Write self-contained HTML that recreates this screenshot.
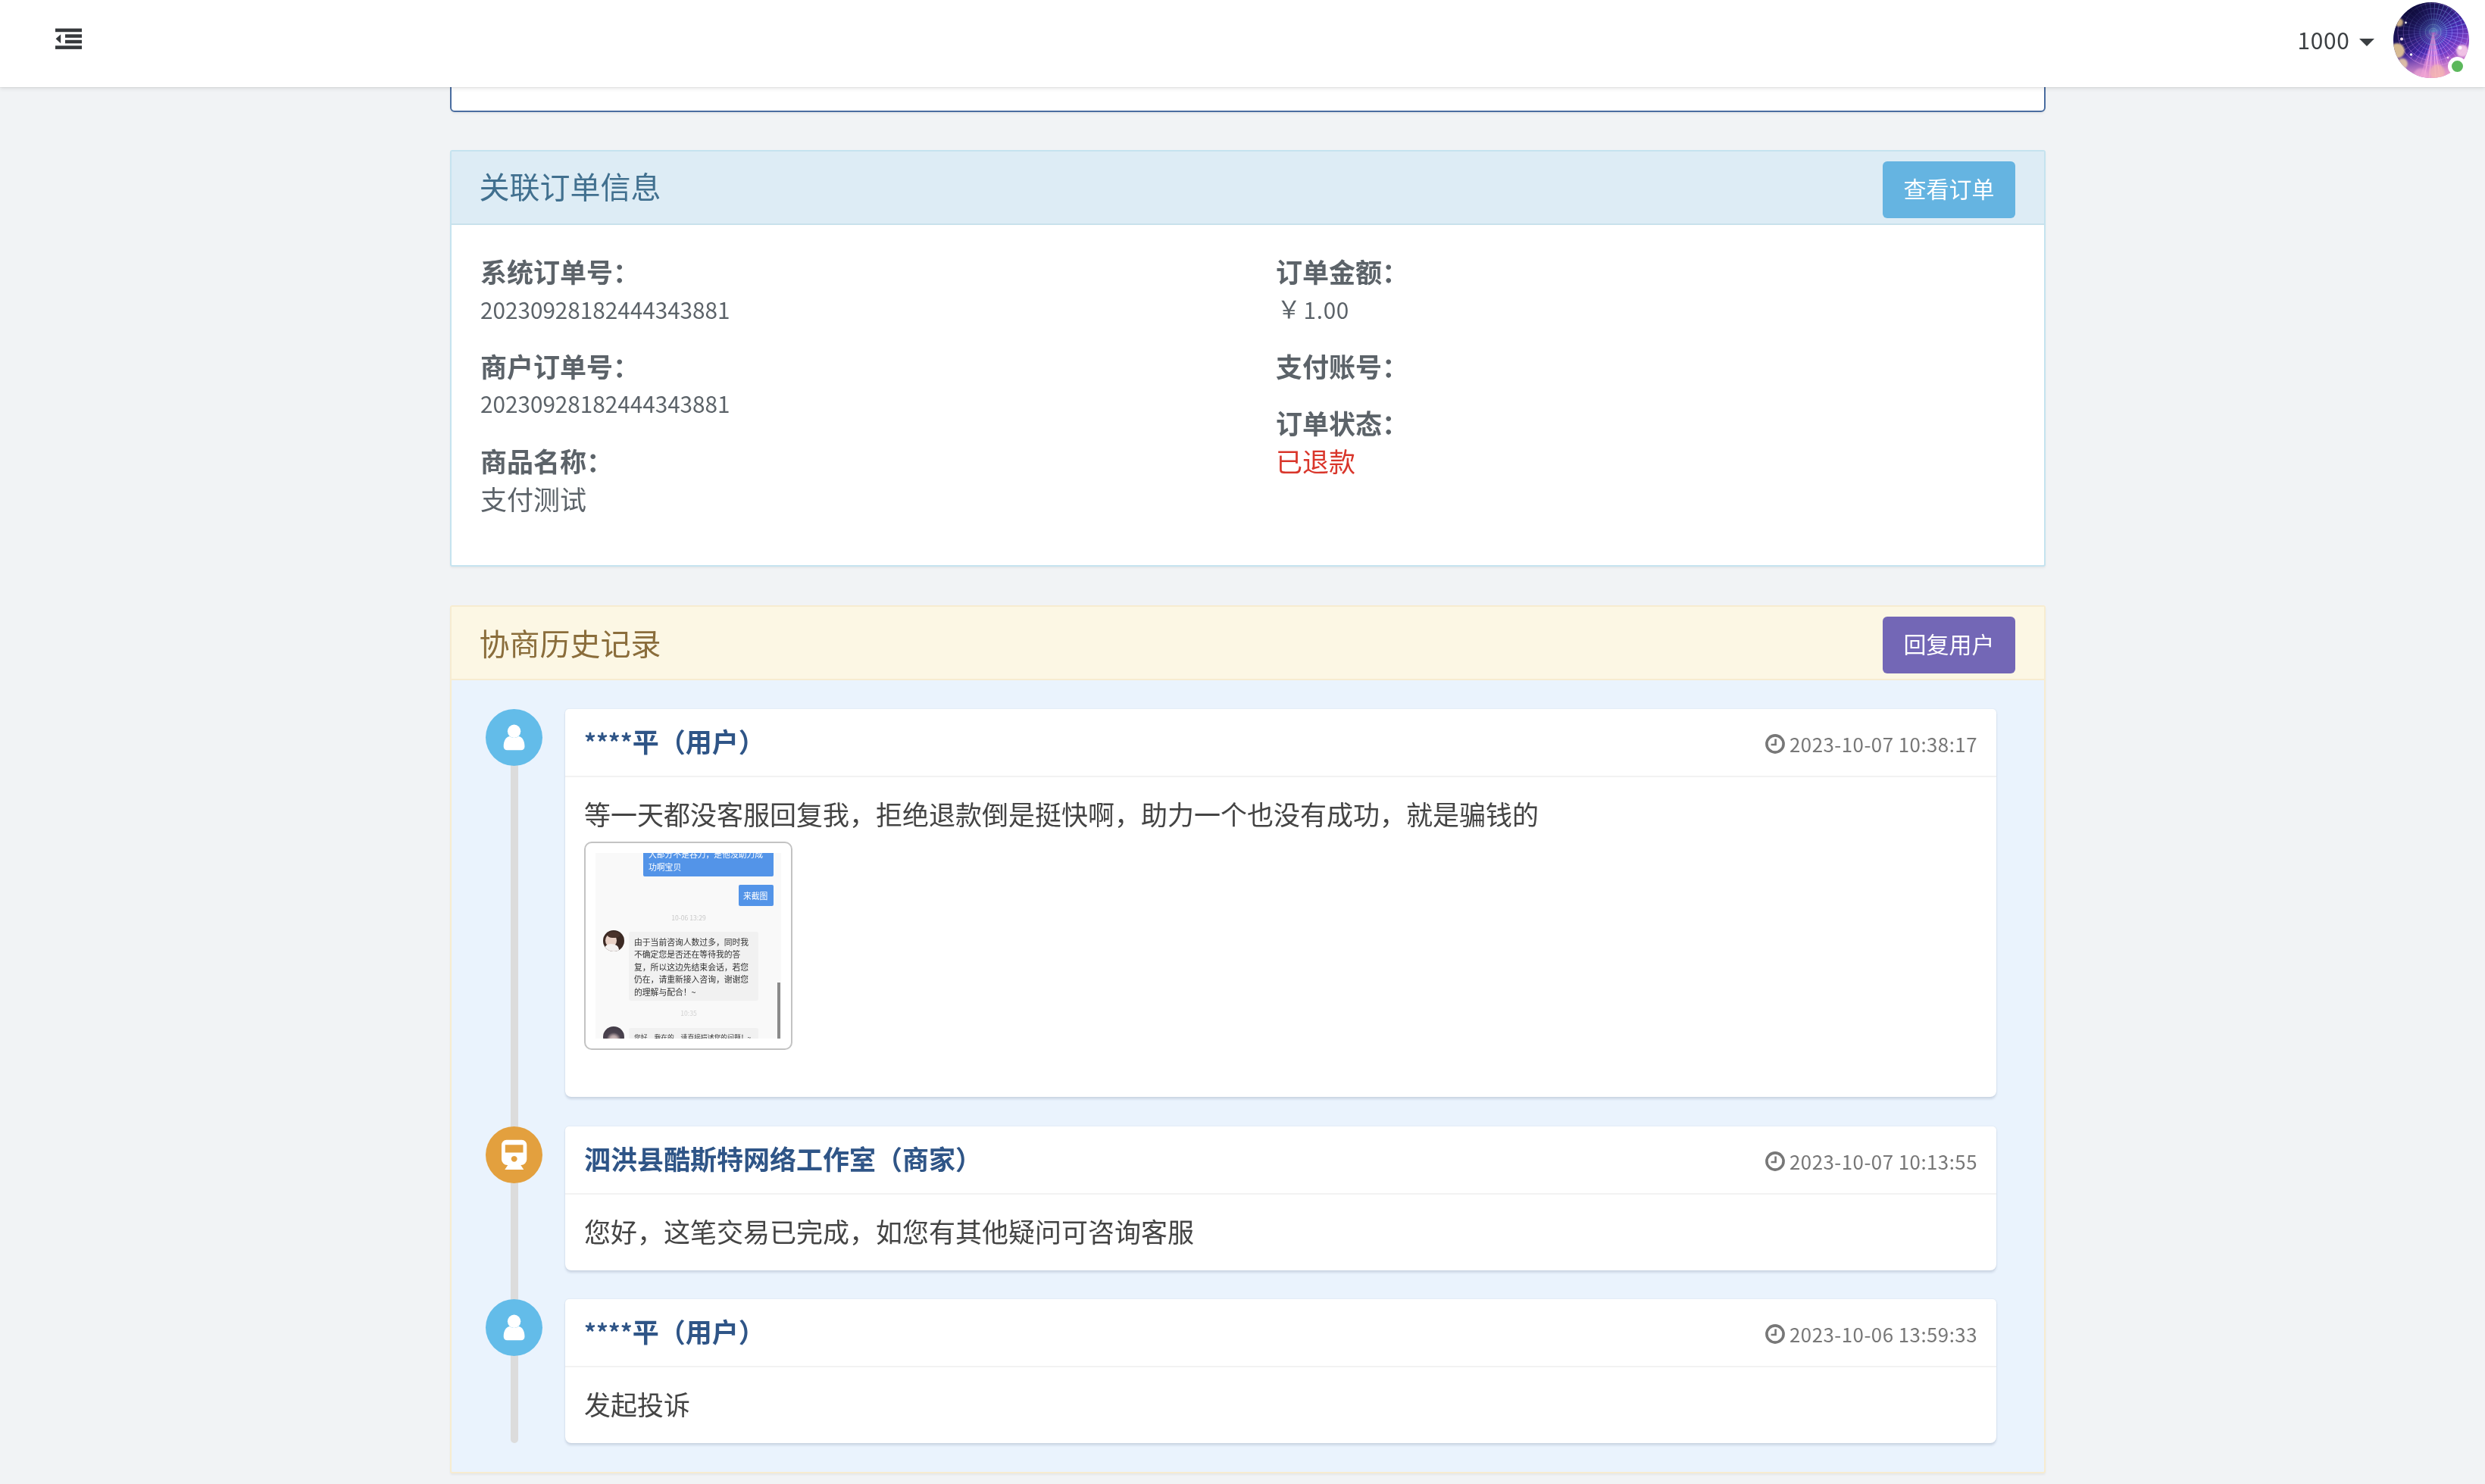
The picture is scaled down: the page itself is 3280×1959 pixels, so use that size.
<!DOCTYPE html>
<html lang="zh-CN">
<head>
<meta charset="utf-8">
<title>投诉详情</title>
<style>
*{box-sizing:border-box;margin:0;padding:0}
html,body{width:3280px;height:1959px;overflow:hidden}
body{background:#f1f3f5;font-family:"Noto Sans CJK SC","Liberation Sans",sans-serif;font-size:35px;line-height:50px;color:#5c6369;position:relative;will-change:transform}
.n{font-size:29.7px;position:relative;top:-2.5px}
.yen{font-size:31.5px;position:relative;left:1.5px;top:-3px}
/* top bar */
#topbar{position:absolute;left:0;top:0;width:3280px;height:115px;background:#fff;z-index:10;box-shadow:0 2px 5px rgba(0,0,0,.10),0 1px 0 rgba(0,0,0,.04)}
#menu{position:absolute;left:73px;top:37px;width:36px;height:29px}
#uname{position:absolute;left:3032.5px;top:27px;font-size:29.8px;letter-spacing:.7px;line-height:50px;color:#3b3f42;white-space:nowrap}
#caret{position:absolute;left:3114px;top:51px;width:0;height:0;border-left:10px solid transparent;border-right:10px solid transparent;border-top:10px solid #3b3f42}
#avatar{position:absolute;left:3159px;top:3px;width:100px;height:100px}
#online{position:absolute;left:3231px;top:75px;width:25px;height:25px;border-radius:50%;background:#5cb85c;border:5px solid #fff}
/* panels */
.panel{position:absolute;left:594px;width:2106px;background:#fff;border:2px solid #ccc;border-radius:3px;box-shadow:0 2px 3px rgba(0,0,0,.05)}
#p0{top:60px;height:88px;border-color:#4a6da0;border-radius:6px}
#p1{top:198px;height:550px;border-color:#c5e3ef}
#p2{top:799px;height:1146px;border-color:#f7ecd0;background:#eaf3fd}
.hd{height:97px;border-bottom:2px solid;position:relative}
#p1 .hd{background:#ddecf5;border-color:#c8e1ec;color:#41708f}
#p2 .hd{background:#fcf7e4;border-color:#f7ecd0;color:#8a6d3b}
.hd h3{position:absolute;left:36.5px;top:20px;font-size:40px;line-height:50px;font-weight:400}
#p2 .hd h3{top:21.5px}
.btn{position:absolute;right:38px;top:13px;width:175px;height:75px;border-radius:6px;color:#fff;font-size:30px;line-height:71px;text-align:center}
.b-info{background:#65b4e1}
.b-purple{background:#7367b6}
/* info body */
.col{position:absolute;top:133px}
.col p{margin:0 0 24.75px;height:100px;white-space:nowrap}
.col p.one{height:50px}
.col b{font-weight:700}
.red{color:#d9362b}
/* timeline */
#line{position:absolute;left:78px;top:172px;width:10px;height:932px;background:#dcdcdc;border-radius:5px}
.dot{position:absolute;left:45px;width:75px;height:75px;border-radius:50%}
.dot svg{position:absolute;left:0;top:0;width:75px;height:75px}
.d-user{background:#63bce9}
.d-shop{background:#e3a03e}
.card{position:absolute;left:150px;width:1889px;background:#fff;border-radius:5px 5px 8px 8px;box-shadow:0 2.5px 3px rgba(50,70,100,.15),0 0 2px rgba(50,70,100,.10)}
.chd{height:89.5px;border-bottom:2px solid #f2f2f2;position:relative}
.chd b i{font-style:normal;font-size:31.4px;position:relative;top:-1px}
.chd b{position:absolute;left:25px;top:16.5px;font-size:35px;line-height:50px;color:#2f5587;font-weight:700;white-space:nowrap}
.chd .tm{position:absolute;right:25px;top:20.5px;font-size:25.8px;letter-spacing:.5px;line-height:50px;color:#777;white-space:nowrap}
.chd .tm svg{position:absolute;left:-32.5px;top:12px;width:26px;height:26px}
.cbd{padding:23.5px 25px 0;color:#444;white-space:nowrap}
/* thumbnail */
#thumb{position:relative;width:275px;height:275px;margin-top:12.4px;border:2.5px solid #c3c3c3;border-radius:10px;background:#fff;overflow:hidden}
#shot{position:absolute;left:13px;top:13px;width:245px;height:245px;background:#f9f9f9;overflow:hidden;font-size:10.8px;line-height:16.4px;color:#333}
#shot div{position:absolute}
</style>
</head>
<body>
<div id="topbar">
<svg id="menu" viewBox="0 0 36 29"><g fill="#36393c"><rect x="0" y="0.6" width="35" height="4.6"/><rect x="13" y="8.3" width="22" height="4.5"/><rect x="13" y="15.8" width="22" height="4.5"/><rect x="0" y="23.3" width="35" height="4.6"/><path d="M0.6 14.3 L7.2 8.2 L7.2 20.2 Z"/></g></svg>
<span id="uname">1000</span><i id="caret"></i>
<svg id="avatar" viewBox="0 0 100 100">
<defs>
<clipPath id="avc"><circle cx="50" cy="50" r="50"/></clipPath>
<linearGradient id="avbg" x1="0" y1="0" x2="0.75" y2="1"><stop offset="0" stop-color="#120f44"/><stop offset="0.35" stop-color="#211766"/><stop offset="0.6" stop-color="#4326a8"/><stop offset="0.8" stop-color="#8a45c4"/><stop offset="1" stop-color="#e894cf"/></linearGradient>
<radialGradient id="avglow" cx="0.526" cy="0.392" r="0.42"><stop offset="0" stop-color="#9fd8ff" stop-opacity="0.9"/><stop offset="0.12" stop-color="#5f86ff" stop-opacity="0.6"/><stop offset="0.55" stop-color="#5a3fe0" stop-opacity="0.3"/><stop offset="1" stop-color="#5a3fe0" stop-opacity="0"/></radialGradient>
<linearGradient id="avbot" x1="0" y1="0" x2="0" y2="1"><stop offset="0.68" stop-color="#f0a0d0" stop-opacity="0"/><stop offset="1" stop-color="#f3a9c6" stop-opacity="0.85"/></linearGradient>
<filter id="avbl" x="-30%" y="-30%" width="160%" height="160%"><feGaussianBlur stdDeviation="1.1"/></filter>
<radialGradient id="avdk" cx="0.25" cy="0.12" r="0.6"><stop offset="0" stop-color="#0d0b38" stop-opacity="0.85"/><stop offset="1" stop-color="#0d0b38" stop-opacity="0"/></radialGradient>
</defs>
<g clip-path="url(#avc)">
<rect width="100" height="100" fill="url(#avbg)"/>
<rect width="100" height="100" fill="url(#avglow)"/>
<path d="M52.6 39.2 L34 104 L68 104 Z" fill="#ef8fe8" opacity="0.5"/>
<path d="M52.6 39.2 L40 104 M52.6 39.2 L62 104 M52.6 39.2 L47 104 M52.6 39.2 L56 104" stroke="#ffb5f2" stroke-width="1.2" opacity="0.85" fill="none"/>
<line x1="52.6" y1="39.2" x2="99.5" y2="41.6" stroke="#9d8cff" stroke-width="0.7" opacity="0.8"/><line x1="52.6" y1="39.2" x2="98.6" y2="48.6" stroke="#9d8cff" stroke-width="0.7" opacity="0.8"/><line x1="52.6" y1="39.2" x2="96.5" y2="55.3" stroke="#9d8cff" stroke-width="0.7" opacity="0.8"/><line x1="52.6" y1="39.2" x2="93.3" y2="61.7" stroke="#e58cf5" stroke-width="0.7" opacity="0.8"/><line x1="52.6" y1="39.2" x2="89.1" y2="67.5" stroke="#e58cf5" stroke-width="0.7" opacity="0.8"/><line x1="52.6" y1="39.2" x2="84.0" y2="72.6" stroke="#e58cf5" stroke-width="0.7" opacity="0.8"/><line x1="52.6" y1="39.2" x2="78.2" y2="76.9" stroke="#e58cf5" stroke-width="0.7" opacity="0.8"/><line x1="52.6" y1="39.2" x2="71.7" y2="80.3" stroke="#e58cf5" stroke-width="0.7" opacity="0.8"/><line x1="52.6" y1="39.2" x2="64.8" y2="82.7" stroke="#e58cf5" stroke-width="0.7" opacity="0.8"/><line x1="52.6" y1="39.2" x2="57.5" y2="84.0" stroke="#e58cf5" stroke-width="0.7" opacity="0.8"/><line x1="52.6" y1="39.2" x2="50.1" y2="84.1" stroke="#e58cf5" stroke-width="0.7" opacity="0.8"/><line x1="52.6" y1="39.2" x2="42.8" y2="83.2" stroke="#e58cf5" stroke-width="0.7" opacity="0.8"/><line x1="52.6" y1="39.2" x2="35.8" y2="81.2" stroke="#e58cf5" stroke-width="0.7" opacity="0.5"/><line x1="52.6" y1="39.2" x2="29.1" y2="78.2" stroke="#e58cf5" stroke-width="0.7" opacity="0.5"/><line x1="52.6" y1="39.2" x2="23.0" y2="74.2" stroke="#e58cf5" stroke-width="0.7" opacity="0.5"/><line x1="52.6" y1="39.2" x2="17.7" y2="69.3" stroke="#e58cf5" stroke-width="0.7" opacity="0.5"/><line x1="52.6" y1="39.2" x2="13.2" y2="63.7" stroke="#e58cf5" stroke-width="0.7" opacity="0.5"/><line x1="52.6" y1="39.2" x2="9.7" y2="57.5" stroke="#e58cf5" stroke-width="0.7" opacity="0.5"/><line x1="52.6" y1="39.2" x2="7.2" y2="50.8" stroke="#9d8cff" stroke-width="0.7" opacity="0.5"/><line x1="52.6" y1="39.2" x2="5.9" y2="43.9" stroke="#9d8cff" stroke-width="0.7" opacity="0.5"/><line x1="52.6" y1="39.2" x2="5.7" y2="36.8" stroke="#9d8cff" stroke-width="0.7" opacity="0.5"/><line x1="52.6" y1="39.2" x2="6.6" y2="29.8" stroke="#86c2ff" stroke-width="0.7" opacity="0.5"/><line x1="52.6" y1="39.2" x2="8.7" y2="23.1" stroke="#86c2ff" stroke-width="0.7" opacity="0.5"/><line x1="52.6" y1="39.2" x2="11.9" y2="16.7" stroke="#86c2ff" stroke-width="0.7" opacity="0.5"/><line x1="52.6" y1="39.2" x2="16.1" y2="10.9" stroke="#86c2ff" stroke-width="0.7" opacity="0.5"/><line x1="52.6" y1="39.2" x2="21.2" y2="5.8" stroke="#86c2ff" stroke-width="0.7" opacity="0.5"/><line x1="52.6" y1="39.2" x2="27.0" y2="1.5" stroke="#86c2ff" stroke-width="0.7" opacity="0.5"/><line x1="52.6" y1="39.2" x2="33.5" y2="-1.9" stroke="#86c2ff" stroke-width="0.7" opacity="0.5"/><line x1="52.6" y1="39.2" x2="40.4" y2="-4.3" stroke="#86c2ff" stroke-width="0.7" opacity="0.5"/><line x1="52.6" y1="39.2" x2="47.7" y2="-5.6" stroke="#86c2ff" stroke-width="0.7" opacity="0.8"/><line x1="52.6" y1="39.2" x2="55.1" y2="-5.7" stroke="#86c2ff" stroke-width="0.7" opacity="0.8"/><line x1="52.6" y1="39.2" x2="62.4" y2="-4.8" stroke="#86c2ff" stroke-width="0.7" opacity="0.8"/><line x1="52.6" y1="39.2" x2="69.4" y2="-2.8" stroke="#86c2ff" stroke-width="0.7" opacity="0.8"/><line x1="52.6" y1="39.2" x2="76.1" y2="0.2" stroke="#86c2ff" stroke-width="0.7" opacity="0.8"/><line x1="52.6" y1="39.2" x2="82.2" y2="4.2" stroke="#86c2ff" stroke-width="0.7" opacity="0.8"/><line x1="52.6" y1="39.2" x2="87.5" y2="9.1" stroke="#86c2ff" stroke-width="0.7" opacity="0.8"/><line x1="52.6" y1="39.2" x2="92.0" y2="14.7" stroke="#86c2ff" stroke-width="0.7" opacity="0.8"/><line x1="52.6" y1="39.2" x2="95.5" y2="20.9" stroke="#86c2ff" stroke-width="0.7" opacity="0.8"/><line x1="52.6" y1="39.2" x2="98.0" y2="27.6" stroke="#86c2ff" stroke-width="0.7" opacity="0.8"/><line x1="52.6" y1="39.2" x2="99.3" y2="34.5" stroke="#9d8cff" stroke-width="0.7" opacity="0.8"/>
<ellipse cx="52.6" cy="39.2" rx="5.2" ry="5" fill="none" stroke="#bfe3ff" stroke-width="0.8" opacity="0.7"/><ellipse cx="52.6" cy="39.2" rx="10.4" ry="10" fill="none" stroke="#9fd0ff" stroke-width="0.8" opacity="0.7"/><ellipse cx="52.6" cy="39.2" rx="17.7" ry="17" fill="none" stroke="#7fb0ff" stroke-width="0.8" opacity="0.7"/><ellipse cx="52.6" cy="39.2" rx="25.0" ry="24" fill="none" stroke="#8f90ff" stroke-width="0.8" opacity="0.7"/><ellipse cx="52.6" cy="39.2" rx="32.2" ry="31" fill="none" stroke="#a084ff" stroke-width="0.8" opacity="0.7"/><ellipse cx="52.6" cy="39.2" rx="39.5" ry="38" fill="none" stroke="#b887f5" stroke-width="0.8" opacity="0.7"/><ellipse cx="52.6" cy="39.2" rx="46.8" ry="45" fill="none" stroke="#d090f0" stroke-width="0.8" opacity="0.7"/>
<rect width="100" height="100" fill="url(#avdk)"/>
<rect width="100" height="100" fill="url(#avbot)"/>
<g filter="url(#avbl)">
<circle cx="7.5" cy="26.5" r="5.5" fill="#e6c58c" opacity="0.85"/>
<circle cx="5" cy="64" r="10" fill="#efd096" opacity="0.88"/>
<circle cx="12" cy="81" r="7" fill="#f2d7a4" opacity="0.8"/>
<circle cx="91" cy="64" r="8" fill="#f7cbe8" opacity="0.9"/>
<circle cx="58" cy="92" r="10" fill="#f6bfa8" opacity="0.6"/>
<circle cx="36" cy="96" r="9" fill="#f2a8d8" opacity="0.55"/>
</g>
<circle cx="16.500" cy="27" r="1.4" fill="#fff" opacity="0.9"/><circle cx="11" cy="48.500" r="2" fill="#ffe9f7" opacity="0.95"/><circle cx="23.500" cy="69" r="1.8" fill="#fff" opacity="0.95"/><circle cx="72" cy="73" r="1.6" fill="#ffd5f5" opacity="0.9"/><circle cx="88" cy="60" r="2.500" fill="#fff" opacity="0.8"/>
</g>
</svg>
<i id="online"></i>
</div>
<div class="panel" id="p0"></div>
<div class="panel" id="p1">
<div class="hd"><h3>关联订单信息</h3><a class="btn b-info">查看订单</a></div>
<div class="col" style="left:38px">
<p><b>系统订单号：</b><br><span class="n">20230928182444343881</span></p>
<p><b>商户订单号：</b><br><span class="n">20230928182444343881</span></p>
<p><b>商品名称：</b><br>支付测试</p>
</div>
<div class="col" style="left:1088px">
<p><b>订单金额：</b><br><span class="yen">￥</span><span class="n" style="letter-spacing:.75px;margin-left:-2.5px"> 1.00</span></p>
<p class="one"><b>支付账号：</b></p>
<p><b>订单状态：</b><br><span class="red">已退款</span></p>
</div>
</div>
<div class="panel" id="p2">
<div class="hd"><h3>协商历史记录</h3><a class="btn b-purple">回复用户</a></div>
<div id="line"></div>
<div class="dot d-user" style="top:135px"><svg viewBox="0 0 75 75"><g fill="#fff"><circle cx="37.6" cy="29.3" r="8.7"/><path d="M23.7 49.5c0-7 2.6-12.6 8-13.5 1.6 1.3 3.7 2.1 5.9 2.1s4.300-.8 5.900-2.100c5.400.9 8 6.500 8 13.500 0 3-2 4.700-4.600 4.700H28.300c-2.600 0-4.600-1.700-4.600-4.700z"/></g></svg></div>
<div class="card" style="top:135px;height:512px">
<div class="chd"><b><i>****</i>平（用户）</b><span class="tm"><svg viewBox="0 0 26 26"><circle cx="13" cy="13" r="11.1" fill="none" stroke="#777" stroke-width="3.6"/><path d="M13.6 6.6v7.4H7.6" fill="none" stroke="#777" stroke-width="2.6"/></svg>2023-10-07 10:38:17</span></div>
<div class="cbd">等一天都没客服回复我，拒绝退款倒是挺快啊，助力一个也没有成功，就是骗钱的<div id="thumb"><div id="shot">
<div style="left:63px;top:-12px;width:172px;height:43px;background:#5394e8;border-radius:2px"></div>
<div style="left:70px;top:-7px;color:#fff;white-space:nowrap">大部分不是吞刀，是他没助力成<br>功啊宝贝</div>
<div style="left:189px;top:42px;width:46px;height:28px;background:#5394e8;border-radius:2px"></div>
<div style="left:195px;top:47.500px;color:#fff;white-space:nowrap">来截图</div>
<div style="left:0;top:77px;width:246px;text-align:center;font-size:8.6px;color:#c9c9c9">10-06 13:29</div>
<div style="left:10px;top:102px;width:28px;height:28px;border-radius:50%;background:#3c2a24;overflow:hidden"><i style="position:absolute;left:3px;top:5px;width:15px;height:17px;background:#ead2c7;border-radius:50%"></i><i style="position:absolute;left:2px;top:18px;width:19px;height:13px;background:#f4f1f0;border-radius:45% 55% 0 0"></i><i style="position:absolute;left:6px;top:2px;width:16px;height:8px;background:#4a332b;border-radius:50% 50% 40% 40%"></i></div>
<div style="left:43.500px;top:104px;width:171px;height:91px;background:#f1f1f1;border-radius:3px"></div>
<div style="left:51px;top:108.500px;white-space:nowrap">由于当前咨询人数过多，同时我<br>不确定您是否还在等待我的答<br>复，所以这边先结束会话，若您<br>仍在，请重新接入咨询，谢谢您<br>的理解与配合！~</div>
<div style="left:0;top:203px;width:246px;text-align:center;font-size:8.6px;color:#d2d2d2">10:35</div>
<div style="left:10px;top:229px;width:28px;height:28px;border-radius:50%;background:radial-gradient(circle at 50% 62%,#d8c6c4 0,#b9a6a8 22%,#4c4450 42%,#3d3742 100%)"></div>
<div style="left:43.500px;top:231px;width:171px;height:40px;background:#f1f1f1;border-radius:3px"></div>
<div style="left:51px;top:235.500px;white-space:nowrap;font-size:8.8px">您好，我在的，请直接描述您的问题！~</div>
<div style="left:239.500px;top:171px;width:4px;height:80px;background:#8b8b8b"></div>
</div></div></div>
</div>
<div class="dot d-shop" style="top:686px"><svg viewBox="0 0 75 75"><path fill="#fff" fill-rule="evenodd" d="M27.500 17.800H47.800a6.500 6.500 0 0 1 6.500 6.500V43.500a7.500 7.500 0 0 1-7.500 7.500H46.300L50.300 56.900H25.300L29.300 51H28.500a7.500 7.500 0 0 1-7.500-7.500V24.300a6.500 6.500 0 0 1 6.500-6.500zM25.800 24.300V34.500H49.500V24.300zM37.700 38.900a3.900 3.900 0 1 0 .01 0z"/></svg></div>
<div class="card" style="top:686px;height:189.5px">
<div class="chd"><b>泗洪县酷斯特网络工作室（商家）</b><span class="tm"><svg viewBox="0 0 26 26"><circle cx="13" cy="13" r="11.1" fill="none" stroke="#777" stroke-width="3.6"/><path d="M13.6 6.6v7.4H7.6" fill="none" stroke="#777" stroke-width="2.6"/></svg>2023-10-07 10:13:55</span></div>
<div class="cbd">您好，这笔交易已完成，如您有其他疑问可咨询客服</div>
</div>
<div class="dot d-user" style="top:914px"><svg viewBox="0 0 75 75"><g fill="#fff"><circle cx="37.6" cy="29.3" r="8.7"/><path d="M23.7 49.5c0-7 2.6-12.6 8-13.5 1.6 1.3 3.7 2.1 5.9 2.1s4.300-.8 5.900-2.100c5.400.9 8 6.500 8 13.500 0 3-2 4.700-4.600 4.700H28.300c-2.600 0-4.600-1.700-4.600-4.700z"/></g></svg></div>
<div class="card" style="top:914px;height:189.5px">
<div class="chd"><b><i>****</i>平（用户）</b><span class="tm"><svg viewBox="0 0 26 26"><circle cx="13" cy="13" r="11.1" fill="none" stroke="#777" stroke-width="3.6"/><path d="M13.6 6.6v7.4H7.6" fill="none" stroke="#777" stroke-width="2.6"/></svg>2023-10-06 13:59:33</span></div>
<div class="cbd">发起投诉</div>
</div>
</div>
</body>
</html>
